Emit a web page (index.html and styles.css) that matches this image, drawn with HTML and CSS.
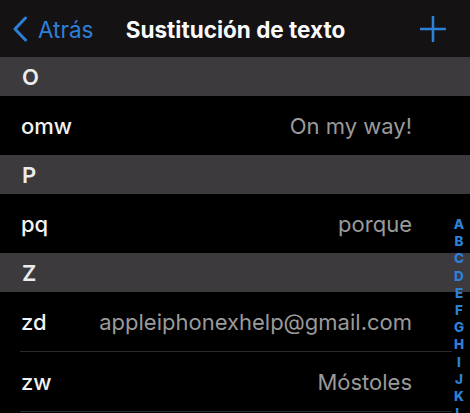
FILE: index.html
```html
<!DOCTYPE html>
<html lang="es">
<head>
<meta charset="utf-8">
<link rel="stylesheet" href="styles.css">
</head>
<body>
<div class="screen">
  <header class="nav">
    <div class="back">
      <svg class="chev" width="16" height="26" viewBox="0 0 16 26"><path d="M13.5 2 L3 13 L13.5 24" fill="none" stroke="#2d80d8" stroke-width="3" stroke-linecap="round" stroke-linejoin="round"/></svg>
      <span>Atrás</span>
    </div>
    <div class="title">Sustitución de texto</div>
    <svg class="plus" width="26" height="26" viewBox="0 0 26 26"><path d="M13 1 V25 M1 13 H25" stroke="#2d80d8" stroke-width="2.6" stroke-linecap="round"/></svg>
  </header>
  <main class="list">
    <div class="section">O</div>
    <div class="row"><span class="key">omw</span><span class="val">On my way!</span></div>
    <div class="section">P</div>
    <div class="row"><span class="key">pq</span><span class="val">porque</span></div>
    <div class="section">Z</div>
    <div class="row sep"><span class="key">zd</span><span class="val">appleiphonexhelp@gmail.com</span></div>
    <div class="row sep"><span class="key">zw</span><span class="val">Móstoles</span></div>
  </main>
  <nav class="index">
    <span>A</span><span>B</span><span>C</span><span>D</span><span>E</span><span>F</span><span>G</span><span>H</span><span>I</span><span>J</span><span>K</span><span>L</span>
  </nav>
</div>
</body>
</html>
```
FILE: styles.css
```css
* { box-sizing: border-box; }
html, body { margin: 0; padding: 0; background: #000; }
body { font-family: Inter, "Noto Sans", "Liberation Sans", sans-serif; color: #f2f2f2; }
.screen { position: relative; width: 470px; height: 413px; overflow: hidden; }
.nav {
  height: 57px;
  background: #151214;
  display: flex;
  align-items: center;
  padding: 0 24px 0 12px;
  position: relative;
}
.back { display: flex; align-items: center; gap: 10px; color: #2d80d8; font-size: 22.5px; }
.back span { margin-top: 1px; }
.title {
  position: absolute; left: 0; right: 0; text-align: center;
  font-weight: 700; font-size: 22.5px; color: #fafafa; pointer-events: none;
  padding-left: 1px; margin-top: 1px;
}
.plus { margin-left: auto; }
.section {
  height: 39px;
  background: #3c3a3c;
  display: flex; align-items: center;
  padding-left: 22px;
  font-size: 22px; font-weight: 600; color: #ececec;
}
.row {
  height: 59px;
  display: flex; align-items: center; justify-content: space-between;
  padding: 0 58px 0 21px;
  font-size: 22px;
  position: relative;
}
.row.sep::after {
  content: ""; position: absolute; left: 20px; right: 18px; bottom: 0;
  height: 1px; background: #2b2a2c;
}
.row.sep { height: 60px; }
.key { font-weight: 500; color: #f2f2f2; }
.val { color: #9a9a9a; }
.index {
  position: absolute; right: 2px; top: 216px; width: 18px;
  display: flex; flex-direction: column; align-items: center;
  font-size: 13.5px; font-weight: 800; color: #2d80d8; line-height: 17.2px;
}
```
